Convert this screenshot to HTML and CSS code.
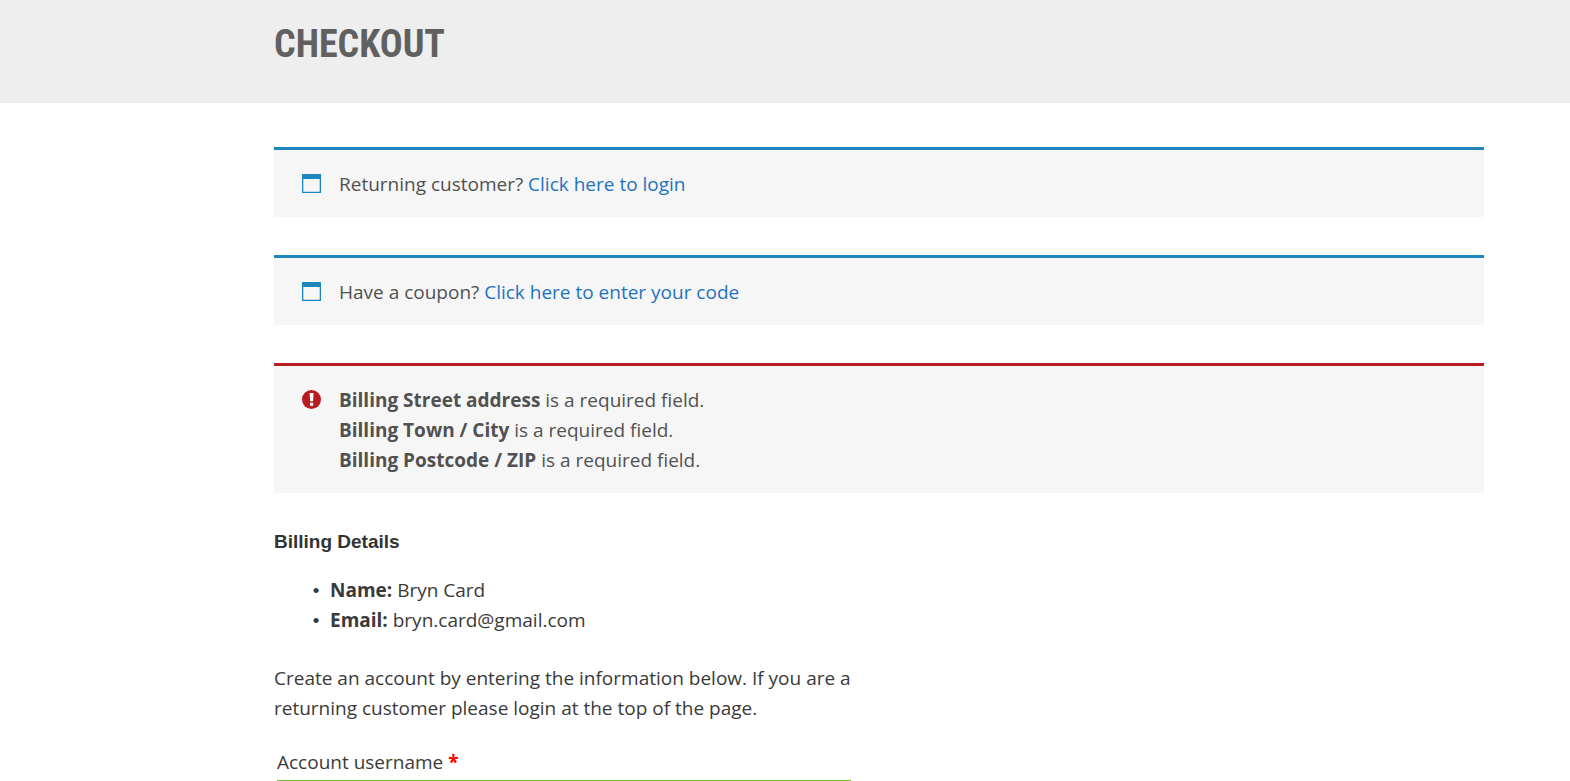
FILE: index.html
```html
<!DOCTYPE html>
<html lang="en">
<head>
<meta charset="utf-8">
<meta name="viewport" content="width=device-width, initial-scale=1">
<title>Checkout</title>
<link rel="stylesheet" href="styles.css">
</head>
<body>
<header class="page-header">
  <h1 class="page-title">CHECKOUT</h1>
</header>
<main class="checkout">
  <div class="notice notice-info">
    <svg class="notice-icon" viewBox="0 0 19 19" aria-hidden="true"><path fill="currentColor" fill-rule="evenodd" d="M0 0h19v19H0zM1.300 5v12.700h16.400V5z"/></svg>
    <p class="notice-text">Returning customer? <a class="notice-link" href="#login">Click here to login</a></p>
  </div>
  <div class="notice notice-info">
    <svg class="notice-icon" viewBox="0 0 19 19" aria-hidden="true"><path fill="currentColor" fill-rule="evenodd" d="M0 0h19v19H0zM1.300 5v12.700h16.400V5z"/></svg>
    <p class="notice-text">Have a coupon? <a class="notice-link" href="#coupon">Click here to enter your code</a></p>
  </div>
  <div class="notice notice-error" role="alert">
    <svg class="notice-icon" viewBox="0 0 19 19" aria-hidden="true"><circle cx="9.500" cy="9.500" r="9.500" fill="currentColor"/><path fill="#f6f6f6" d="M7.600 3h4l-.5 8.200h-3zM8 12.800h3.200v3H8z"/></svg>
    <ul class="notice-list">
      <li><strong>Billing Street address</strong> is a required field.</li>
      <li><strong>Billing Town / City</strong> is a required field.</li>
      <li><strong>Billing Postcode / ZIP</strong> is a required field.</li>
    </ul>
  </div>
  <form class="billing">
    <h2 class="billing-title">Billing Details</h2>
    <ul class="billing-list">
      <li><strong>Name:</strong> Bryn Card</li>
      <li><strong>Email:</strong> bryn.card@gmail.com</li>
    </ul>
    <p class="billing-help">Create an account by entering the information below. If you are a returning customer please login at the top of the page.</p>
    <div class="field">
      <label class="field-label" for="username">Account username <span class="required">*</span></label>
      <input class="field-input" id="username" name="username" type="text" required>
    </div>
  </form>
</main>
</body>
</html>
```
FILE: styles.css
```css
* {
  box-sizing: border-box;
}

html {
  height: 100%;
  overflow: hidden;
}

body {
  height: 100%;
  overflow: hidden;
  margin: 0;
  background: #fff;
  color: #3a3a3a;
  font-family: "Open Sans", sans-serif;
  font-size: 19px;
  line-height: 30px;
}

h1, h2, p, ul {
  margin: 0;
  padding: 0;
}

.page-header {
  padding: 16px 86px 31px 274px;
  background: #eee;
}

.page-title {
  color: #606060;
  font-family: "Roboto Condensed", "Liberation Sans Narrow", "Liberation Sans", sans-serif;
  font-size: 38px;
  line-height: 56px;
}

.checkout {
  padding: 44px 86px 0 274px;
}

.notice {
  display: flex;
  gap: 18px;
  margin-bottom: 38px;
  padding: 19px 28px 18px;
  border-top: 3px solid;
  background: #f6f6f6;
}

.notice-info {
  color: #1e85be;
}

.notice-error {
  color: #b81c23;
}

.notice-icon {
  flex: none;
  width: 19px;
  height: 19px;
  margin-top: 5px;
}

.notice-text,
.notice-list {
  color: #515151;
}

.notice-list {
  list-style: none;
}

.notice-link {
  color: #1e73be;
  text-decoration: none;
}

.billing {
  max-width: 580px;
}

.billing-title {
  margin-bottom: 22px;
  color: #333;
  font-family: "Liberation Sans", Arial, sans-serif;
  font-size: 19px;
  line-height: 22px;
}

.billing-list {
  margin-bottom: 28px;
  padding-left: 56px;
  list-style-type: "•\00a0\00a0";
}

.billing-list li::marker {
  font-family: "Liberation Sans", Arial, sans-serif;
}

.billing-help {
  margin-bottom: 24px;
}

.field {
  display: flex;
  flex-direction: column;
  gap: 3px;
  padding: 0 3px;
}

.required {
  color: #f00;
  font-weight: 700;
}

.field-input {
  height: 40px;
  padding: 0 8px;
  border: 1px solid #69bf29;
  font: inherit;
}
```
